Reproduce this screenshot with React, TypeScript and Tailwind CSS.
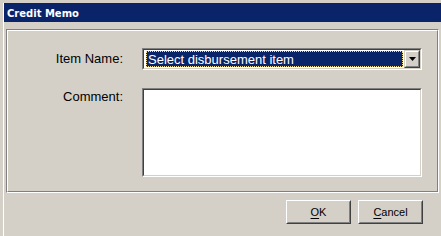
import React from "react";

function Sunken({ className, children }: { className: string; children?: React.ReactNode }) {
  return (
    <div className={`border-t border-l border-t-[#808080] border-l-[#808080] border-r border-b border-r-white border-b-white ${className}`}>
      <div className="w-full h-full border-t border-l border-t-[#404040] border-l-[#404040] border-r border-b border-r-[#D4D0C8] border-b-[#D4D0C8] bg-white flex">
        {children}
      </div>
    </div>
  );
}

function Btn({ first, rest }: { first: string; rest: string }) {
  return (
    <div className="w-[65px] h-[24px] border-t border-l border-t-white border-l-white border-r border-b border-r-[#404040] border-b-[#404040]">
      <div className="w-full h-full border-t border-l border-t-[#D4D0C8] border-l-[#D4D0C8] border-r border-b border-r-[#808080] border-b-[#808080] flex items-center justify-center text-[11px] text-black">
        <span className="underline underline-offset-[2px]">{first}</span>
        <span>{rest}</span>
      </div>
    </div>
  );
}

export default function App() {
  return (
    <div className="w-[441px] h-[236px] overflow-hidden bg-[#D4D0C8] font-['Liberation_Sans',Arial,sans-serif]">
      <div className="ml-[3px] mt-[3px] h-[233px] w-[460px] border-l border-white flex flex-col">
        <div className="h-[19px] bg-[#0A246A] flex items-center pl-[3px] pt-[1px] text-white font-bold text-[10px] font-['DejaVu_Sans',sans-serif]">
          Credit Memo
        </div>
        <div className="mt-[7px] ml-[2px] w-[433px] h-[164px] border-t border-l border-t-[#808080] border-l-[#808080] border-r border-b border-r-white border-b-white">
          <div className="w-full h-full border-t border-l border-t-white border-l-white border-r border-b border-r-[#808080] border-b-[#808080] pt-[17px]">
            <div className="flex items-center">
              <div className="w-[115px] text-right text-[13px] text-black">Item Name:</div>
              <Sunken className="ml-[19px] w-[280px] h-[22px]">
                <div className="flex-1 ml-[2px] mr-[1px] my-[1px] bg-[#0A246A] border border-dotted border-[#F5DB95] flex items-center pl-[1px] text-white text-[13px] leading-none">
                  Select disbursement item
                </div>
                <div className="w-[16px] h-full border-t border-l border-t-[#D4D0C8] border-l-[#D4D0C8] border-r border-b border-r-[#404040] border-b-[#404040]">
                  <div className="w-full h-full bg-[#D4D0C8] border-t border-l border-t-white border-l-white border-r border-b border-r-[#808080] border-b-[#808080] flex items-center justify-center">
                    <svg width="7" height="4" viewBox="0 0 7 4">
                      <path d="M0 0h7L3.5 4z" fill="#000" />
                    </svg>
                  </div>
                </div>
              </Sunken>
            </div>
            <div className="flex items-start mt-[18px]">
              <div className="w-[115px] text-right text-[13px] text-black -mt-[1px]">Comment:</div>
              <Sunken className="ml-[19px] w-[280px] h-[89px]" />
            </div>
          </div>
        </div>
        <div className="mt-[7px] pl-[282px] flex gap-[7px]">
          <Btn first="O" rest="K" />
          <Btn first="C" rest="ancel" />
        </div>
      </div>
    </div>
  );
}
